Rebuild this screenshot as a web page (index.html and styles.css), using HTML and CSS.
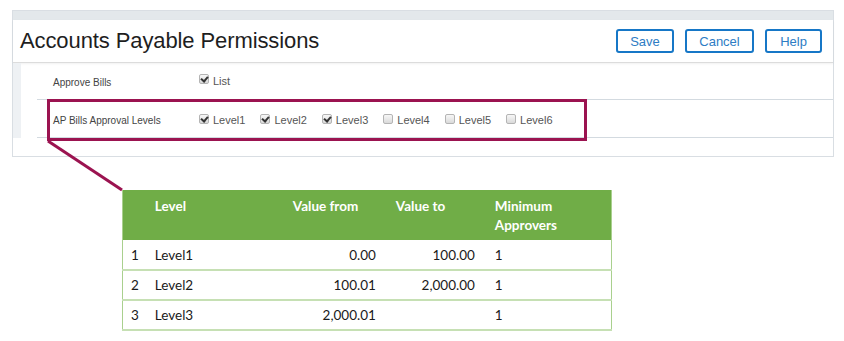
FILE: index.html
```html
<!DOCTYPE html>
<html lang="en">

<head>
    <meta charset="UTF-8">
    <meta name="viewport" content="width=device-width, initial-scale=1.0">
    <title>Accounts Payable Permissions</title>
    <link rel="stylesheet" href="styles.css">
</head>

<body>
    <div class="panel">
        <div class="topbar"></div>
        <div class="header">
            <h1>Accounts Payable Permissions</h1>
            <div class="actions">
                <button class="btn btn_save">Save</button>
                <button class="btn btn_cancel">Cancel</button>
                <button class="btn btn_help">Help</button>
            </div>
        </div>
        <div class="body">
            <div class="strip"></div>
            <div class="rows">
                <div class="row">
                    <div class="label">Approve Bills</div>
                    <div class="opts">
                        <span class="opt"><i class="cb on"></i>List</span>
                    </div>
                </div>
                <div class="row row_levels">
                    <div class="label">AP Bills Approval Levels</div>
                    <div class="opts">
                        <span class="opt"><i class="cb on"></i>Level1</span>
                        <span class="opt"><i class="cb on"></i>Level2</span>
                        <span class="opt"><i class="cb on"></i>Level3</span>
                        <span class="opt"><i class="cb"></i>Level4</span>
                        <span class="opt"><i class="cb"></i>Level5</span>
                        <span class="opt"><i class="cb"></i>Level6</span>
                    </div>
                    <div class="callout"></div>
                </div>
            </div>
        </div>
    </div>

    <!-- connector from the highlighted row to the table -->
    <svg class="connector" width="844" height="341">
        <line x1="48" y1="141" x2="122" y2="190" stroke="#9b1350" stroke-width="3" />
    </svg>

    <table class="levels">
        <thead>
            <tr>
                <th class="c_num"></th>
                <th class="c_name">Level</th>
                <th class="c_from">Value from</th>
                <th class="c_to">Value to</th>
                <th class="c_min">Minimum<br>Approvers</th>
            </tr>
        </thead>
        <tbody>
            <tr>
                <td>1</td>
                <td>Level1</td>
                <td class="num">0.00</td>
                <td class="num">100.00</td>
                <td>1</td>
            </tr>
            <tr>
                <td>2</td>
                <td>Level2</td>
                <td class="num">100.01</td>
                <td class="num">2,000.00</td>
                <td>1</td>
            </tr>
            <tr>
                <td>3</td>
                <td>Level3</td>
                <td class="num">2,000.01</td>
                <td class="num"></td>
                <td>1</td>
            </tr>
        </tbody>
    </table>
</body>

</html>
```

FILE: styles.css
```css
* {
    padding: 0;
    margin: 0;
    box-sizing: border-box;
}

body {
    width: 844px;
    height: 341px;
    background: #fff;
    font-family: "Liberation Sans", Arial, sans-serif;
    position: relative;
    overflow: hidden;
}

/* 权限面板 */
.panel {
    width: 822px;
    height: 147px;
    margin: 10px 0 0 12px;
    border: 1px solid #d9dee3;
    border-top: 0;
    display: flex;
    flex-direction: column;
}

.topbar {
    height: 10px;
    background: #e3e8eb;
    border-top: 1px solid #d9dee3;
}

.header {
    height: 43px;
    display: flex;
    align-items: center;
    justify-content: space-between;
    padding: 0 11px 0 7px;
    border-bottom: 1px solid #dcdcdc;
    box-shadow: 0 1px 2px rgba(0, 0, 0, 0.06);
}

.header h1 {
    font-size: 22px;
    font-weight: normal;
    color: #1e1e1e;
    letter-spacing: -0.1px;
}

.actions {
    display: flex;
    gap: 11px;
}

.btn {
    height: 24px;
    border: 2px solid #1677c7;
    border-radius: 3px;
    background: #fff;
    color: #2d7cc4;
    font-family: "Liberation Sans", Arial, sans-serif;
    font-size: 13px;
}

.btn_save {
    width: 58px;
}

.btn_cancel {
    width: 69px;
}

.btn_help {
    width: 57px;
}

.body {
    flex: 1;
    display: flex;
}

.strip {
    width: 8px;
    height: 75px;
    background: #eef1f4;
}

.rows {
    flex: 1;
    margin-left: 16px;
}

.row {
    height: 37px;
    display: flex;
    align-items: center;
    padding: 3px 0 0 16px;
    border-bottom: 1px solid #d3dae0;
    position: relative;
}

.row_levels {
    height: 38px;
}

.label {
    width: 146px;
    font-size: 10px;
    color: #444;
}

.opts {
    display: flex;
    gap: 15px;
    font-size: 11px;
    color: #555;
}

.row:first-child .opts {
    margin-top: -4px;
}

.opt {
    display: flex;
    align-items: center;
}

.cb {
    width: 10px;
    height: 10px;
    margin-right: 4px;
    margin-top: -3px;
    border: 1px solid #b4b4b4;
    border-radius: 2px;
    background: linear-gradient(#f7f7f7, #dadada);
    position: relative;
}

.cb.on::after {
    content: "";
    position: absolute;
    left: 2px;
    top: 0px;
    width: 3px;
    height: 5px;
    border: solid #333;
    border-width: 0 2px 2px 0;
    transform: rotate(40deg);
}

/* 高亮框 */
.callout {
    position: absolute;
    left: 10px;
    top: -1px;
    width: 540px;
    height: 42px;
    border: 3px solid #9b1350;
}

.connector {
    position: absolute;
    left: 0;
    top: 0;
    pointer-events: none;
}

/* 审批级别表 */
.levels {
    margin: 33px 0 0 122px;
    width: 490px;
    border-collapse: collapse;
    font-family: Lato, "Open Sans", sans-serif;
    font-size: 13.5px;
    color: #1a1a1a;
    border-left: 1px solid #a9d08e;
    border-right: 1px solid #a9d08e;
}

.levels th {
    height: 50px;
    background: #70ad47;
    color: #fff;
    text-align: left;
    vertical-align: top;
    padding: 7px 8px 0;
    line-height: 19px;
    font-weight: bold;
}

.levels td {
    height: 30px;
    padding: 0 8px;
    border-bottom: 2px solid #c6e0b4;
}

.levels .c_num {
    width: 24px;
}

.levels .c_name {
    width: 138px;
}

.levels .c_from {
    width: 103px;
}

.levels .c_to {
    width: 99px;
}

.levels td.num {
    text-align: right;
    padding-right: 12px;
}
```
